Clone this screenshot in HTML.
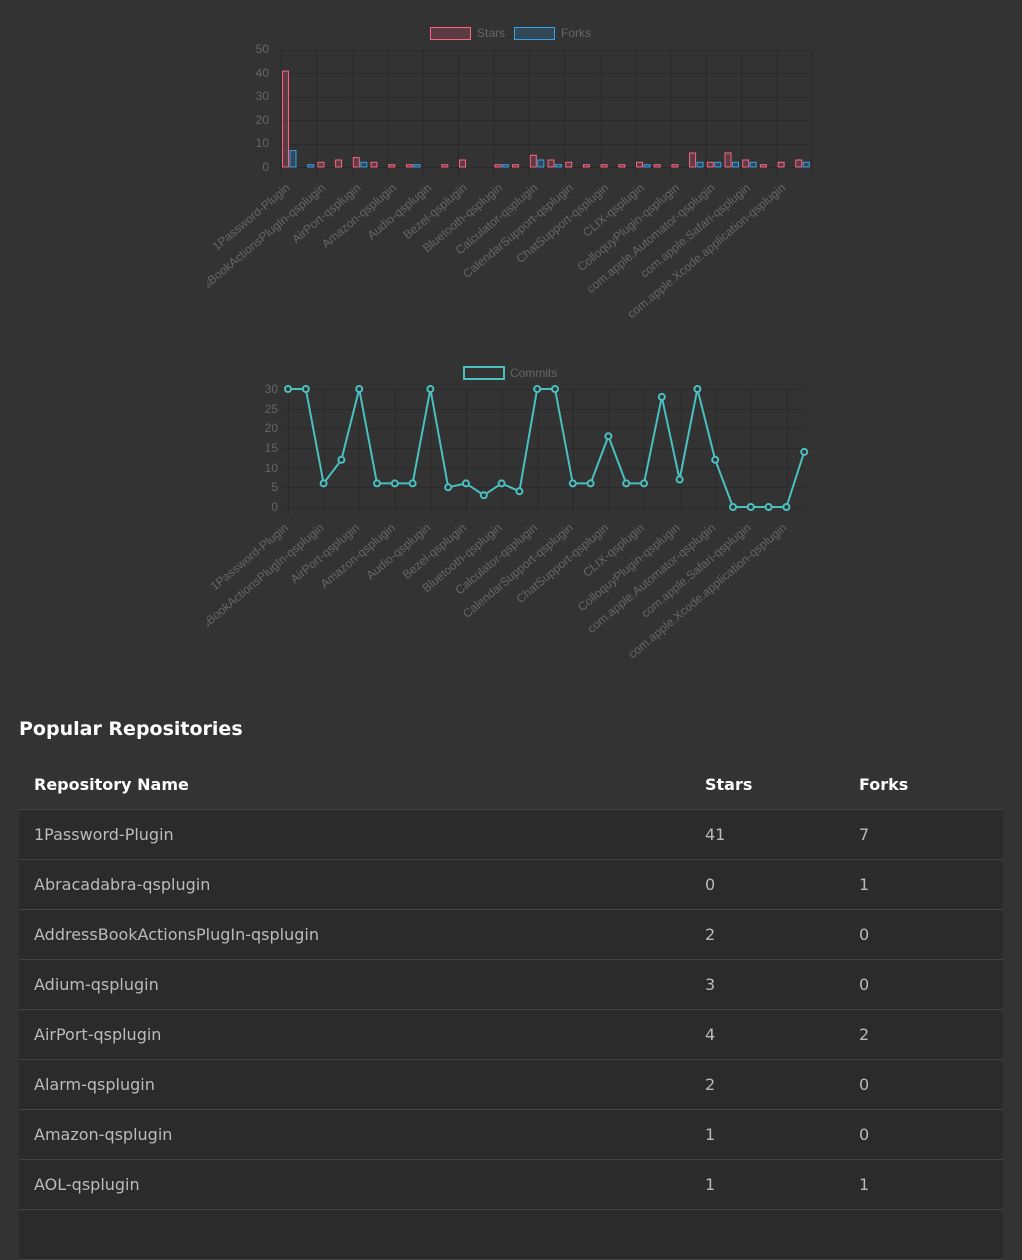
<!DOCTYPE html>
<html><head><meta charset="utf-8"><style>
html,body{margin:0;padding:0;background:#333;width:1022px;height:1221px;overflow:hidden}
svg{position:absolute;left:0;top:0}
svg text{font-family:"Liberation Sans",Arial,sans-serif;font-size:12px;fill:#666}
h2{position:absolute;left:19px;top:718px;margin:0;font:bold 19px "DejaVu Sans",sans-serif;color:#fff}
table{position:absolute;left:19px;top:760px;width:984px;border-collapse:collapse;font:16px "DejaVu Sans",sans-serif;table-layout:fixed}
th{color:#fff;font-weight:bold;text-align:left;height:49px;padding:0 15px;border-bottom:1px solid #444}
td{color:#bbb;height:49px;padding:0 15px;background:#2b2b2b;border-bottom:1px solid #444}
</style></head><body>
<svg width="1022" height="700" viewBox="0 0 1022 700">
<defs><clipPath id="cl"><rect x="207" y="0" width="815" height="700"/></clipPath></defs>
<!-- BAR CHART -->
<rect x="430.5" y="27.5" width="40" height="12" fill="rgba(255,99,132,0.2)" stroke="#ff6384"/>
<text x="477" y="37">Stars</text>
<rect x="514.5" y="27.5" width="40" height="12" fill="rgba(54,162,235,0.2)" stroke="#36a2eb"/>
<text x="561" y="37">Forks</text>
<g stroke="#2a2a2a" stroke-width="1">
<line x1="276" y1="50.5" x2="812" y2="50.5"/><line x1="276" y1="73.5" x2="812" y2="73.5"/><line x1="276" y1="97.5" x2="812" y2="97.5"/><line x1="276" y1="120.5" x2="812" y2="120.5"/><line x1="276" y1="144.5" x2="812" y2="144.5"/><line x1="276" y1="167.5" x2="812" y2="167.5"/>
<line x1="281.5" y1="50" x2="281.5" y2="177"/><line x1="316.9" y1="50" x2="316.9" y2="177"/><line x1="352.3" y1="50" x2="352.3" y2="177"/><line x1="387.7" y1="50" x2="387.7" y2="177"/><line x1="423.1" y1="50" x2="423.1" y2="177"/><line x1="458.5" y1="50" x2="458.5" y2="177"/><line x1="493.9" y1="50" x2="493.9" y2="177"/><line x1="529.3" y1="50" x2="529.3" y2="177"/><line x1="564.7" y1="50" x2="564.7" y2="177"/><line x1="600.1" y1="50" x2="600.1" y2="177"/><line x1="635.5" y1="50" x2="635.5" y2="177"/><line x1="670.9" y1="50" x2="670.9" y2="177"/><line x1="706.3" y1="50" x2="706.3" y2="177"/><line x1="741.7" y1="50" x2="741.7" y2="177"/><line x1="777.1" y1="50" x2="777.1" y2="177"/><line x1="812" y1="50" x2="812" y2="177"/>
</g>
<g text-anchor="end"><text x="269" y="53">50</text><text x="269" y="77">40</text><text x="269" y="100">30</text><text x="269" y="124">20</text><text x="269" y="147">10</text><text x="269" y="171">0</text></g>
<g fill="rgba(255,99,132,0.2)" stroke="#ff6384" stroke-width="1">
<rect x="282.5" y="71.1" width="6" height="95.9"/>
<rect x="317.9" y="162.3" width="6" height="4.7"/>
<rect x="335.6" y="160" width="6" height="7"/>
<rect x="353.3" y="157.6" width="6" height="9.4"/>
<rect x="371" y="162.3" width="6" height="4.7"/>
<rect x="388.7" y="164.7" width="6" height="2.3"/>
<rect x="406.4" y="164.7" width="6" height="2.3"/>
<rect x="441.8" y="164.7" width="6" height="2.3"/>
<rect x="459.5" y="160" width="6" height="7"/>
<rect x="494.9" y="164.7" width="6" height="2.3"/>
<rect x="512.6" y="164.7" width="6" height="2.3"/>
<rect x="530.3" y="155.3" width="6" height="11.7"/>
<rect x="548" y="160" width="6" height="7"/>
<rect x="565.7" y="162.3" width="6" height="4.7"/>
<rect x="583.4" y="164.7" width="6" height="2.3"/>
<rect x="601.1" y="164.7" width="6" height="2.3"/>
<rect x="618.8" y="164.7" width="6" height="2.3"/>
<rect x="636.5" y="162.3" width="6" height="4.7"/>
<rect x="654.2" y="164.7" width="6" height="2.3"/>
<rect x="671.9" y="164.7" width="6" height="2.3"/>
<rect x="689.6" y="153" width="6" height="14"/>
<rect x="707.3" y="162.3" width="6" height="4.7"/>
<rect x="725" y="153" width="6" height="14"/>
<rect x="742.7" y="160" width="6" height="7"/>
<rect x="760.4" y="164.7" width="6" height="2.3"/>
<rect x="778.1" y="162.3" width="6" height="4.7"/>
<rect x="795.8" y="160" width="6" height="7"/>
</g>
<g fill="rgba(54,162,235,0.2)" stroke="#36a2eb" stroke-width="1">
<rect x="290" y="150.6" width="6" height="16.4"/>
<rect x="307.7" y="164.7" width="6" height="2.3"/>
<rect x="360.8" y="162.3" width="6" height="4.7"/>
<rect x="413.9" y="164.7" width="6" height="2.3"/>
<rect x="502.4" y="164.7" width="6" height="2.3"/>
<rect x="537.8" y="160" width="6" height="7"/>
<rect x="555.5" y="164.7" width="6" height="2.3"/>
<rect x="644" y="164.7" width="6" height="2.3"/>
<rect x="697.1" y="162.3" width="6" height="4.7"/>
<rect x="714.8" y="162.3" width="6" height="4.7"/>
<rect x="732.5" y="162.3" width="6" height="4.7"/>
<rect x="750.2" y="162.3" width="6" height="4.7"/>
<rect x="803.3" y="162.3" width="6" height="4.7"/>
</g>
<g text-anchor="end" clip-path="url(#cl)">
<text transform="translate(290.8,189) rotate(-40)">1Password-Plugin</text>
<text transform="translate(326.2,189) rotate(-40)">AddressBookActionsPlugIn-qsplugin</text>
<text transform="translate(361.6,189) rotate(-40)">AirPort-qsplugin</text>
<text transform="translate(397,189) rotate(-40)">Amazon-qsplugin</text>
<text transform="translate(432.4,189) rotate(-40)">Audio-qsplugin</text>
<text transform="translate(467.8,189) rotate(-40)">Bezel-qsplugin</text>
<text transform="translate(503.2,189) rotate(-40)">Bluetooth-qsplugin</text>
<text transform="translate(538.6,189) rotate(-40)">Calculator-qsplugin</text>
<text transform="translate(574,189) rotate(-40)">CalendarSupport-qsplugin</text>
<text transform="translate(609.4,189) rotate(-40)">ChatSupport-qsplugin</text>
<text transform="translate(644.8,189) rotate(-40)">CLIX-qsplugin</text>
<text transform="translate(680.2,189) rotate(-40)">ColloquyPlugin-qsplugin</text>
<text transform="translate(715.6,189) rotate(-40)">com.apple.Automator-qsplugin</text>
<text transform="translate(751,189) rotate(-40)">com.apple.Safari-qsplugin</text>
<text transform="translate(786.4,189) rotate(-40)">com.apple.Xcode.application-qsplugin</text>
</g>

<!-- LINE CHART -->
<rect x="464" y="367" width="40" height="12" fill="none" stroke="#4bc0c0" stroke-width="2"/>
<text x="510" y="377">Commits</text>
<g stroke="#2a2a2a" stroke-width="1">
<line x1="283" y1="389.5" x2="805" y2="389.5"/><line x1="283" y1="409.5" x2="805" y2="409.5"/><line x1="283" y1="428.5" x2="805" y2="428.5"/><line x1="283" y1="448.5" x2="805" y2="448.5"/><line x1="283" y1="468.5" x2="805" y2="468.5"/><line x1="283" y1="487.5" x2="805" y2="487.5"/><line x1="283" y1="507.5" x2="805" y2="507.5"/>
<line x1="288.5" y1="389" x2="288.5" y2="515"/><line x1="324.1" y1="389" x2="324.1" y2="515"/><line x1="359.7" y1="389" x2="359.7" y2="515"/><line x1="395.3" y1="389" x2="395.3" y2="515"/><line x1="430.9" y1="389" x2="430.9" y2="515"/><line x1="466.5" y1="389" x2="466.5" y2="515"/><line x1="502.1" y1="389" x2="502.1" y2="515"/><line x1="537.7" y1="389" x2="537.7" y2="515"/><line x1="573.3" y1="389" x2="573.3" y2="515"/><line x1="608.9" y1="389" x2="608.9" y2="515"/><line x1="644.5" y1="389" x2="644.5" y2="515"/><line x1="680.1" y1="389" x2="680.1" y2="515"/><line x1="715.7" y1="389" x2="715.7" y2="515"/><line x1="751.3" y1="389" x2="751.3" y2="515"/><line x1="786.9" y1="389" x2="786.9" y2="515"/>
</g>
<g text-anchor="end"><text x="278" y="393">30</text><text x="278" y="413">25</text><text x="278" y="432">20</text><text x="278" y="452">15</text><text x="278" y="472">10</text><text x="278" y="491">5</text><text x="278" y="511">0</text></g>
<polyline fill="none" stroke="#4bc0c0" stroke-width="2" stroke-linejoin="round" points="288,389 305.8,389 323.6,483.4 341.4,459.8 359.2,389 377,483.4 394.8,483.4 412.6,483.4 430.4,389 448.2,487.3 466,483.4 483.8,495.2 501.6,483.4 519.4,491.3 537.2,389 555,389 572.8,483.4 590.6,483.4 608.4,436.2 626.2,483.4 644,483.4 661.8,396.9 679.6,479.5 697.4,389 715.2,459.8 733,507 750.8,507 768.6,507 786.4,507 804.2,451.9"/>
<g fill="#333" stroke="#4bc0c0" stroke-width="2">
<circle cx="288" cy="389" r="3"/><circle cx="305.8" cy="389" r="3"/><circle cx="323.6" cy="483.4" r="3"/><circle cx="341.4" cy="459.8" r="3"/><circle cx="359.2" cy="389" r="3"/><circle cx="377" cy="483.4" r="3"/><circle cx="394.8" cy="483.4" r="3"/><circle cx="412.6" cy="483.4" r="3"/><circle cx="430.4" cy="389" r="3"/><circle cx="448.2" cy="487.3" r="3"/><circle cx="466" cy="483.4" r="3"/><circle cx="483.8" cy="495.2" r="3"/><circle cx="501.6" cy="483.4" r="3"/><circle cx="519.4" cy="491.3" r="3"/><circle cx="537.2" cy="389" r="3"/><circle cx="555" cy="389" r="3"/><circle cx="572.8" cy="483.4" r="3"/><circle cx="590.6" cy="483.4" r="3"/><circle cx="608.4" cy="436.2" r="3"/><circle cx="626.2" cy="483.4" r="3"/><circle cx="644" cy="483.4" r="3"/><circle cx="661.8" cy="396.9" r="3"/><circle cx="679.6" cy="479.5" r="3"/><circle cx="697.4" cy="389" r="3"/><circle cx="715.2" cy="459.8" r="3"/><circle cx="733" cy="507" r="3"/><circle cx="750.8" cy="507" r="3"/><circle cx="768.6" cy="507" r="3"/><circle cx="786.4" cy="507" r="3"/><circle cx="804.2" cy="451.9" r="3"/>
</g>
<g text-anchor="end" clip-path="url(#cl)">
<text transform="translate(289,529) rotate(-40)">1Password-Plugin</text>
<text transform="translate(324.6,529) rotate(-40)">AddressBookActionsPlugIn-qsplugin</text>
<text transform="translate(360.2,529) rotate(-40)">AirPort-qsplugin</text>
<text transform="translate(395.8,529) rotate(-40)">Amazon-qsplugin</text>
<text transform="translate(431.4,529) rotate(-40)">Audio-qsplugin</text>
<text transform="translate(467,529) rotate(-40)">Bezel-qsplugin</text>
<text transform="translate(502.6,529) rotate(-40)">Bluetooth-qsplugin</text>
<text transform="translate(538.2,529) rotate(-40)">Calculator-qsplugin</text>
<text transform="translate(573.8,529) rotate(-40)">CalendarSupport-qsplugin</text>
<text transform="translate(609.4,529) rotate(-40)">ChatSupport-qsplugin</text>
<text transform="translate(645,529) rotate(-40)">CLIX-qsplugin</text>
<text transform="translate(680.6,529) rotate(-40)">ColloquyPlugin-qsplugin</text>
<text transform="translate(716.2,529) rotate(-40)">com.apple.Automator-qsplugin</text>
<text transform="translate(751.8,529) rotate(-40)">com.apple.Safari-qsplugin</text>
<text transform="translate(787.4,529) rotate(-40)">com.apple.Xcode.application-qsplugin</text>
</g>
</svg>
<h2>Popular Repositories</h2>
<table>
<colgroup><col style="width:671px"><col style="width:154px"><col style="width:159px"></colgroup>
<tr><th>Repository Name</th><th>Stars</th><th>Forks</th></tr>
<tr><td>1Password-Plugin</td><td>41</td><td>7</td></tr>
<tr><td>Abracadabra-qsplugin</td><td>0</td><td>1</td></tr>
<tr><td>AddressBookActionsPlugIn-qsplugin</td><td>2</td><td>0</td></tr>
<tr><td>Adium-qsplugin</td><td>3</td><td>0</td></tr>
<tr><td>AirPort-qsplugin</td><td>4</td><td>2</td></tr>
<tr><td>Alarm-qsplugin</td><td>2</td><td>0</td></tr>
<tr><td>Amazon-qsplugin</td><td>1</td><td>0</td></tr>
<tr><td>AOL-qsplugin</td><td>1</td><td>1</td></tr>
<tr><td>&nbsp;</td><td></td><td></td></tr>
</table>
</body></html>
